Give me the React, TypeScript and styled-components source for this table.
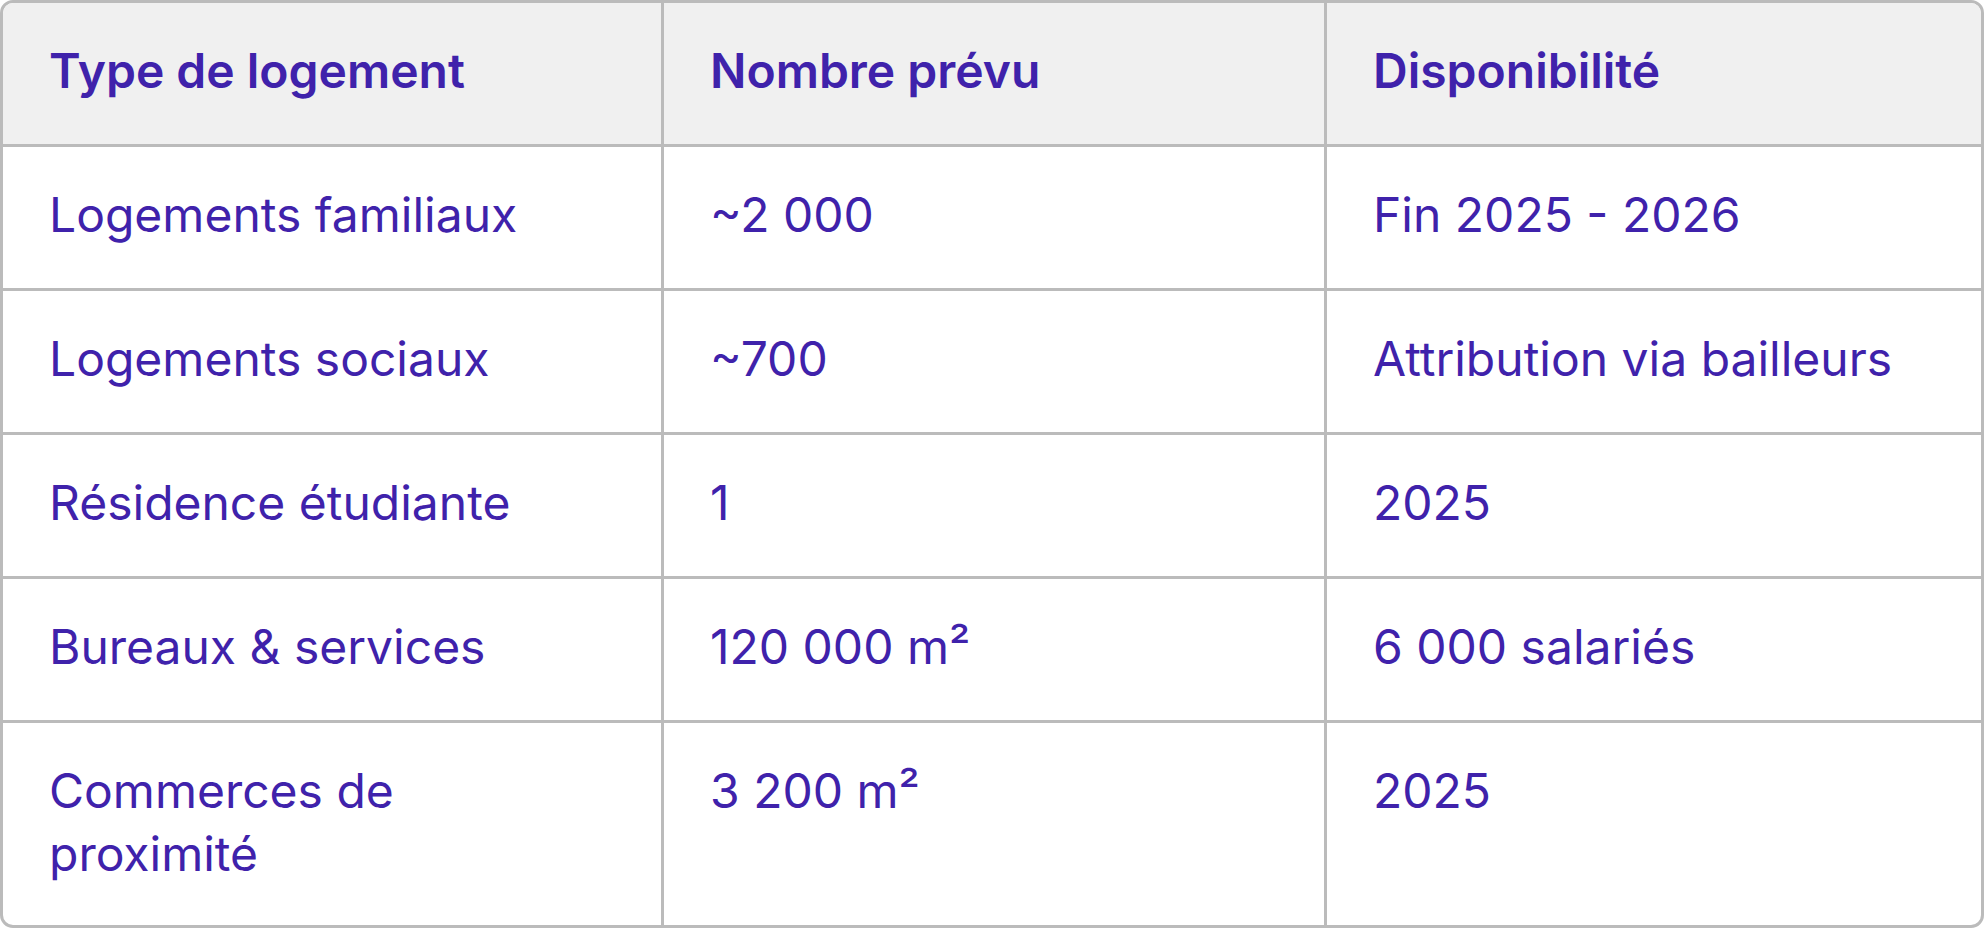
import React from "react";
import styled, {createGlobalStyle} from "styled-components";

const GlobalStyle = createGlobalStyle`
    html, body {
        margin: 0;
        padding: 0;
        background: #ffffff;
    }

    body {
        font-family: Inter, "Noto Sans", "Liberation Sans", sans-serif;
    }
`;

const Frame = styled.div`
    width: 1984px;
    box-sizing: border-box;
    border: 3px solid #bbbbbb;
    border-radius: 13px;
    overflow: hidden;
`;

const Table = styled.table`
    width: 100%;
    border-collapse: separate;
    border-spacing: 0;
    table-layout: fixed;
    color: #3f22ab;
    font-size: 48px;
    line-height: 63px;
`;

const Col = styled.col<{ $width?: number }>`
    width: ${p => p.$width ? `${p.$width}px` : "auto"};
`;

const HeadCell = styled.th`
    background: #f0f0f0;
    font-weight: 600;
    text-align: left;
    vertical-align: top;
    padding: 36px 46px 42px;
    border-right: 3px solid #bbbbbb;
    border-bottom: 3px solid #bbbbbb;

    &:last-child {
        border-right: none;
    }
`;

const Cell = styled.td<{ $last?: boolean }>`
    font-weight: 400;
    vertical-align: top;
    padding: ${p => p.$last ? "36px 46px 40px" : "36px 46px 42px"};
    border-right: 3px solid #bbbbbb;
    border-bottom: ${p => p.$last ? "none" : "3px solid #bbbbbb"};

    &:last-child {
        border-right: none;
    }
`;

const columns = ["Type de logement", "Nombre prévu", "Disponibilité"];

const rows = [
    ["Logements familiaux", "~2 000", "Fin 2025 - 2026"],
    ["Logements sociaux", "~700", "Attribution via bailleurs"],
    ["Résidence étudiante", "1", "2025"],
    ["Bureaux & services", "120 000 m²", "6 000 salariés"],
    ["Commerces de proximité", "3 200 m²", "2025"],
];

export default function App() {
    return (
        <>
            <GlobalStyle/>
            <Frame>
                <Table>
                    <colgroup>
                        <Col $width={661}/>
                        <Col $width={663}/>
                        <Col/>
                    </colgroup>
                    <thead>
                    <tr>
                        {columns.map(c => <HeadCell key={c}>{c}</HeadCell>)}
                    </tr>
                    </thead>
                    <tbody>
                    {rows.map((row, i) => (
                        <tr key={i}>
                            {row.map((value, j) => (
                                <Cell key={j} $last={i === rows.length - 1}>{value}</Cell>
                            ))}
                        </tr>
                    ))}
                    </tbody>
                </Table>
            </Frame>
        </>
    );
}
